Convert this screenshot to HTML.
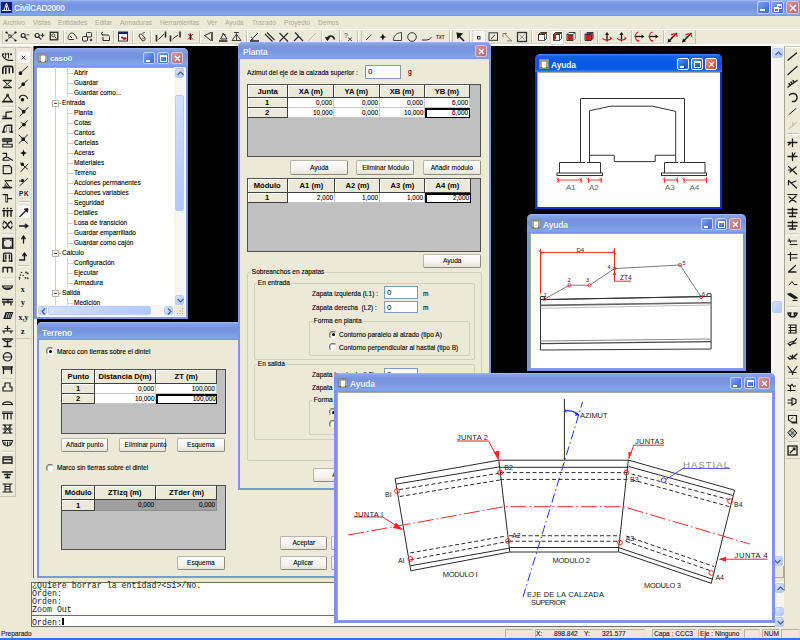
<!DOCTYPE html><html><head><meta charset="utf-8"><style>
*{box-sizing:border-box}
html,body{margin:0;padding:0}
body{width:800px;height:640px;overflow:hidden;position:relative;background:#ECE9D8;font-family:"Liberation Sans",sans-serif;font-size:7px;color:#000}
.a{position:absolute}
.t{position:absolute;white-space:nowrap;line-height:1}
.tbi{position:absolute;background:linear-gradient(180deg,#a6bcf5 0%,#86a2e8 9%,#7894e0 30%,#7794e0 52%,#7c9fe6 72%,#80a6ea 90%,#7292e6 100%)}
.tba{position:absolute;background:linear-gradient(180deg,#4d94f8 0%,#1262ea 12%,#0757e4 50%,#0a5ce8 85%,#3d88f4 100%)}
.ttl{position:absolute;color:#eef3fd;font-weight:bold;font-size:8.5px;white-space:nowrap;line-height:1;letter-spacing:-0.15px;text-shadow:0.5px 0.5px 0 rgba(60,80,160,.25)}
.cb{position:absolute;width:12px;height:12px;border-radius:2px;border:1px solid #c3d0f5;background:linear-gradient(135deg,#86a6f0 0%,#4f7ae6 60%,#3f6bdf 100%)}
.cbx{background:linear-gradient(135deg,#d49aa2 0%,#c07880 60%,#b56c76 100%);border-color:#dcc0cc}
.cba{border-color:#fff;background:linear-gradient(135deg,#5a9af8 0%,#2263e8 60%,#1a54d8 100%)}
.cbax{border-color:#fff;background:linear-gradient(135deg,#f49a7c 0%,#e05a32 60%,#cf4420 100%)}
.menu{color:#aca899;font-size:8px;transform:scaleX(.82);transform-origin:0 0}
.btn{position:absolute;background:linear-gradient(180deg,#fefefd 0%,#f4f3ee 60%,#e6e3d6 100%);border:1px solid #b9b6a8;border-right-color:#8e8c80;border-bottom-color:#8e8c80;border-radius:2px;font-size:8px;text-align:center;line-height:12px;white-space:nowrap}
.btn span{display:inline-block;transform:scaleX(.82);-webkit-text-stroke:0.1px #000}
.ui{font-size:8px;transform:scaleX(.82);transform-origin:0 0;-webkit-text-stroke:0.12px #000}
.inp{position:absolute;background:#fff;border:1px solid #7f9db9;font-size:8px;padding-left:2px;line-height:11px}
.grp{position:absolute;border:1px solid #d0d0bf;border-radius:2px}
.gl{position:absolute;background:#ECE9D8;padding:0 1px;white-space:nowrap;line-height:1;font-size:8px;transform:scaleX(.82);transform-origin:0 0;-webkit-text-stroke:0.12px #000}
.rad{position:absolute;width:8px;height:8px;border-radius:50%;background:#fff;border:1px solid;border-color:#6d6d66 #e6e4da #f4f3ee #7a7a72;box-shadow:inset 0.5px 0.5px 0 #a5a39a}
.rad.on:after{content:"";position:absolute;left:1.5px;top:1.5px;width:3px;height:3px;border-radius:50%;background:#000}
.grid{position:absolute;background:#c0c0c0;border:1px solid #505050}
.hc{position:absolute;background:#ECE9D8;border-right:1px solid #404040;border-bottom:1px solid #404040;box-shadow:inset 1px 1px 0 #fff;font-weight:bold;font-size:8px;text-align:center;white-space:nowrap}
.hc span{display:inline-block;transform:scaleX(.95)}
.dc{position:absolute;background:#fff;border-right:1px solid #c8c8c8;border-bottom:1px solid #c8c8c8;font-size:8px;text-align:right;padding-right:1px;white-space:nowrap}
.dc span{display:inline-block;transform:scaleX(.8);transform-origin:100% 50%;-webkit-text-stroke:0.1px #000}
.sbb{position:absolute;background:linear-gradient(135deg,#d6e3fd 0%,#bcd0fa 60%,#b2c8f8 100%);border:1px solid #b9cdf7;border-radius:2px}
</style></head><body>
<div class="tbi" style="left:0;top:0;width:800px;height:16px"></div>
<div class="a" style="left:1px;top:2px;width:11px;height:11px;background:#0c1c80"><svg width="11" height="11" viewBox="0 0 11 11"><path d="M5.5 1.2L2.8 8.8M5.5 1.2L8.2 8.8M0.8 8.5H10.2M5.5 3.5V8.5" stroke="#fff" stroke-width="0.9" fill="none"/></svg></div>
<div class="ttl" style="left:14px;top:4px;font-size:8.5px;letter-spacing:-0.4px">CivilCAD2000</div>
<div class="cb" style="left:757px;top:1px;width:13px;height:13px"><div class="a" style="left:2px;top:7px;width:5px;height:2px;background:#fff"></div></div>
<div class="cb" style="left:771px;top:1px;width:13px;height:13px"><div class="a" style="left:5px;top:2px;width:5px;height:5px;border:1px solid #fff;border-top-width:2px"></div><div class="a" style="left:2px;top:5px;width:5px;height:5px;border:1px solid #fff;border-top-width:2px;background:#5a80e6"></div></div>
<div class="cb cbx" style="left:786px;top:1px;width:13px;height:13px"><svg class="a" style="left:2px;top:2px" width="8" height="8"><path d="M1 1L7 7M7 1L1 7" stroke="#fff" stroke-width="1.4"/></svg></div>
<div class="t menu" style="left:3px;top:19px">Archivo</div>
<div class="t menu" style="left:33px;top:19px">Vistas</div>
<div class="t menu" style="left:58px;top:19px">Entidades</div>
<div class="t menu" style="left:95px;top:19px">Editar</div>
<div class="t menu" style="left:120px;top:19px">Armaduras</div>
<div class="t menu" style="left:160px;top:19px">Herramientas</div>
<div class="t menu" style="left:207px;top:19px">Ver</div>
<div class="t menu" style="left:225px;top:19px">Ayuda</div>
<div class="t menu" style="left:252px;top:19px">Trazado</div>
<div class="t menu" style="left:284px;top:19px">Proyecto</div>
<div class="t menu" style="left:318px;top:19px">Demos</div>
<div class="a" style="left:0;top:29px;width:800px;height:1px;background:#fcfcf9"></div>
<div class="a" style="left:0;top:44px;width:800px;height:2px;background:#fbfaf5"></div>
<svg class="a" style="left:0;top:0" width="800" height="46" viewBox="0 0 800 46">
<path d="M63.5 31V43" stroke="#c5c2b2" stroke-width="1"/><path d="M64.5 31V43" stroke="#fff" stroke-width="1"/>
<path d="M96.5 31V43" stroke="#c5c2b2" stroke-width="1"/><path d="M97.5 31V43" stroke="#fff" stroke-width="1"/>
<path d="M113.5 31V43" stroke="#c5c2b2" stroke-width="1"/><path d="M114.5 31V43" stroke="#fff" stroke-width="1"/>
<path d="M132.5 31V43" stroke="#c5c2b2" stroke-width="1"/><path d="M133.5 31V43" stroke="#fff" stroke-width="1"/>
<path d="M150.5 31V43" stroke="#c5c2b2" stroke-width="1"/><path d="M151.5 31V43" stroke="#fff" stroke-width="1"/>
<path d="M199.5 31V43" stroke="#c5c2b2" stroke-width="1"/><path d="M200.5 31V43" stroke="#fff" stroke-width="1"/>
<path d="M246.5 31V43" stroke="#c5c2b2" stroke-width="1"/><path d="M247.5 31V43" stroke="#fff" stroke-width="1"/>
<path d="M321.5 31V43" stroke="#c5c2b2" stroke-width="1"/><path d="M322.5 31V43" stroke="#fff" stroke-width="1"/>
<path d="M339.5 31V43" stroke="#c5c2b2" stroke-width="1"/><path d="M340.5 31V43" stroke="#fff" stroke-width="1"/>
<path d="M357.5 31V43" stroke="#c5c2b2" stroke-width="1"/><path d="M358.5 31V43" stroke="#fff" stroke-width="1"/>
<path d="M449.5 31V43" stroke="#c5c2b2" stroke-width="1"/><path d="M450.5 31V43" stroke="#fff" stroke-width="1"/>
<path d="M469.5 31V43" stroke="#c5c2b2" stroke-width="1"/><path d="M470.5 31V43" stroke="#fff" stroke-width="1"/>
<path d="M531.5 31V43" stroke="#c5c2b2" stroke-width="1"/><path d="M532.5 31V43" stroke="#fff" stroke-width="1"/>
<path d="M580.5 31V43" stroke="#c5c2b2" stroke-width="1"/><path d="M581.5 31V43" stroke="#fff" stroke-width="1"/>
<path d="M597.5 31V43" stroke="#c5c2b2" stroke-width="1"/><path d="M598.5 31V43" stroke="#fff" stroke-width="1"/>
<path d="M631.5 31V43" stroke="#c5c2b2" stroke-width="1"/><path d="M632.5 31V43" stroke="#fff" stroke-width="1"/>
<path d="M663.5 31V43" stroke="#c5c2b2" stroke-width="1"/><path d="M664.5 31V43" stroke="#fff" stroke-width="1"/>
<path d="M2.5 31V43" stroke="#d5d2c4"/><path d="M695.5 30V44" stroke="#c5c2b2"/><path d="M2 43.5H695" stroke="#d8d5c6"/>
<g stroke="#2a2a2a" fill="none" stroke-width="1">
<path d="M7 33L15 40M15 33L7 40" stroke-width="0.8" stroke="#444"/><circle cx="10" cy="36.2" r="1.5" stroke-width="0.8"/>
<g fill="#111" stroke="none"><circle cx="6.5" cy="32.5" r="1.1"/><circle cx="15.5" cy="32.5" r="1.1"/><circle cx="6.5" cy="40.5" r="1.1"/><circle cx="15.5" cy="40.5" r="1.1"/></g>
<circle cx="23.2" cy="35.5" r="2" stroke-width="1.2"/><path d="M24.8 37.2L27.3 39.7" stroke-width="1.2"/><path d="M26.5 34.8H29.2" stroke-width="0.9"/>
<circle cx="37.2" cy="35.5" r="2" stroke-width="1.2"/><path d="M38.8 37.2L41.3 39.7" stroke-width="1.2"/><path d="M40.5 35.2H44.5M42.5 33.2V37.2" stroke-width="1.1"/>
<rect x="50.3" y="32.3" width="7.5" height="7.5" stroke-width="1.3"/><circle cx="53.3" cy="35.3" r="1.5" stroke-width="0.8"/><path d="M54.5 36.6L56.5 38.6" stroke-width="0.9"/>
<path d="M68 39C68 35 70 33 72 33S76 36 77 39M68.5 39.5H74M70 36L72 38" stroke="#333"/>
<rect x="82.5" y="36.5" width="5" height="4.5" rx="1"/><rect x="86.5" y="32.5" width="5" height="4.5" rx="1"/><circle cx="91" cy="40" r="0.8" fill="#111"/>
<path d="M102 35H107.5C109 35 109.5 36 109.5 37.5V40.5H103V37"/><path d="M101 33.5L103 32M101 33.5L103 35"/>
</g>
<rect x="118.5" y="32" width="9" height="9" fill="#fff" stroke="#333" stroke-width="1"/><rect x="118.5" y="32" width="9" height="2" fill="#0a246a"/><ellipse cx="124.5" cy="38.5" rx="2.2" ry="1.3" fill="#d00"/><circle cx="122" cy="37.5" r="1" fill="#333"/>
<g stroke="#2a2a2a" fill="none" stroke-width="1">
<path d="M139 36C139 34 141 33.5 142.5 35L145 38C145.5 40 144 41.5 142 40.5Z" stroke="#333"/><path d="M142.5 34L144.5 32"/><circle cx="143" cy="38.5" r="0.7" fill="#d00" stroke="none"/>
<path d="M156.5 35V41.5M165.5 31.5V37.5" stroke-width="1.6"/><path d="M158.5 39.5L164 34" stroke-width="1"/>
<path d="M170.5 35.5V41.5M180 31.5V37.5" stroke-width="1.6"/><path d="M172.5 39L178 35" stroke-width="1"/>
<path d="M188 34L193 39.5M193 34L188 39.5" stroke="#e8141a" stroke-width="1"/><path d="M190.5 33.5V40" stroke="#222" stroke-width="1.5"/>
<path d="M211 32.5L204.5 35.5L211 40.5" stroke-width="1"/><path d="M212 32V41" stroke-width="1.5"/>
<path d="M219 41H227.5" stroke-width="1.6"/><path d="M220.5 39L223.5 33.5L227 39H220.5" stroke-width="1"/><path d="M222 33.5L226 35" stroke-width="0.8"/>
<path d="M236.5 32V41M232 40.5L236.5 34L241 40.5M232 40.5H241M234 32.5H239" stroke="#444"/>
<path d="M250 41H259" stroke-width="1.6"/><path d="M250.5 40.5L258 33M253 40.5C253 38.5 252 37.5 251.5 37.5" stroke-width="1"/>
<path d="M265 34L272.5 41.5M267 32.5L274.5 40" stroke-width="1.1"/>
<path d="M279.5 33L288 41.5M288 33L279.5 41.5" stroke-width="1.1"/>
<path d="M294 41L298.5 36.5M295 32.5L303 41" stroke-width="1.2"/>
<path d="M308 41L316 33" stroke="#bdbab0" stroke-width="1"/>
<path d="M327.5 39.5C327.5 35.5 333.5 34.5 334.5 39.5" stroke-width="1.6"/><path d="M325.5 37.5L327.5 40.5L329.5 37.5Z" fill="#111"/>
</g><text x="344" y="38" font-size="7" fill="#333" font-family="Liberation Sans">?</text><path d="M348 37.5L352 41M352 37.5L348 41" stroke="#333" stroke-width="0.9"/><g stroke="#1e1e1e" fill="none" stroke-width="1.1">
<path d="M361.5 31V43" stroke="#c5c2b2"/>
<path d="M366 40L371.5 34.5" stroke="#333" stroke-width="0.9"/>
<path d="M382.8 33.5L384 36.3L386.5 37L384 37.8L382.8 40.5L381.6 37.8L379.3 37L381.6 36.3Z" fill="#111" stroke="none"/>
<path d="M393.5 40.5C393.5 36 396 33 401.5 32.5V40.5Z" stroke="#444" stroke-width="1"/>
<circle cx="412" cy="37" r="4.3" stroke="#333" stroke-width="1"/>
<path d="M422 40H426C429 40 430.5 38.5 431.5 37" stroke="#333" stroke-width="1"/>
</g><text x="436" y="39" font-size="4.5" font-weight="bold" fill="#333" font-family="Liberation Sans">TXT</text><g stroke="#1e1e1e" fill="none" stroke-width="1.1">
<path d="M452.5 31V43" stroke="#c5c2b2"/>
<path d="M464 41L457.5 34.5" stroke-width="1.6"/><path d="M457 33L462 33.8L457.8 38Z" fill="#111"/>
</g>
<rect x="472.5" y="30.5" width="13" height="14" fill="#fbfbf8" stroke="#dcd9cc"/><rect x="477.5" y="36.5" width="2.5" height="2.5" fill="none" stroke="#222" stroke-width="0.9"/>
<g stroke="#2a2a2a" fill="none" stroke-width="1">
<rect x="489" y="32.8" width="8.5" height="7.5" stroke="#333"/><path d="M491 39L495 35" stroke="#333" stroke-width="0.9"/>
<path d="M503 33.5H507M503 33.5V37M504 33L511.5 41M507 41H512" stroke="#7a786e" stroke-width="0.9"/>
<rect x="517.5" y="32.5" width="9" height="9" stroke="#333" stroke-width="1.3"/><path d="M519.5 34.5L524.5 39.5M524.5 34.5L519.5 39.5" stroke="#777" stroke-width="0.8"/>
</g>
<path d="M538.5 34.5L540.5 32.5H546.5V38.5L544.5 40.5H538.5Z" fill="#fff" stroke="#222" stroke-width="0.9"/><path d="M539.0 35.0L540.8 33.0H546.0L544.2 35.0Z" fill="#e01010"/><rect x="539.0" y="35.0" width="5.2" height="5.2" fill="#fff"/><path d="M544.5 35.0L546.2 33.2V38.5L544.5 40.2Z" fill="#fff"/><path d="M538.5 34.5H544.5V40.5M544.5 34.5L546.5 32.5" stroke="#222" stroke-width="0.8" fill="none"/>
<rect x="550.5" y="30.5" width="13" height="14" fill="#fbfbf8" stroke="#dcd9cc"/>
<path d="M553.5 34.5L555.5 32.5H561.5V38.5L559.5 40.5H553.5Z" fill="#fff" stroke="#222" stroke-width="0.9"/><path d="M554.0 35.0L555.8 33.0H561.0L559.2 35.0Z" fill="#e01010"/><rect x="554.0" y="35.0" width="5.2" height="5.2" fill="#fff"/><path d="M559.5 35.0L561.2 33.2V38.5L559.5 40.2Z" fill="#fff"/><path d="M553.5 34.5H559.5V40.5M559.5 34.5L561.5 32.5" stroke="#222" stroke-width="0.8" fill="none"/>
<path d="M554 35L556 33V39L554 40.5Z" fill="#e01010"/>
<path d="M567 34.5L569 32.5H575V38.5L573 40.5H567Z" fill="#fff" stroke="#222" stroke-width="0.9"/><path d="M567.5 35.0L569.3 33.0H574.5L572.7 35.0Z" fill="#fff"/><rect x="567.5" y="35.0" width="5.2" height="5.2" fill="#e01010"/><path d="M573 35.0L574.7 33.2V38.5L573 40.2Z" fill="#fff"/><path d="M567 34.5H573V40.5M573 34.5L575 32.5" stroke="#222" stroke-width="0.8" fill="none"/>
<path d="M585 34.5L587 32.5H593V38.5L591 40.5H585Z" fill="#fff" stroke="#222" stroke-width="0.9"/><path d="M585.5 35.0L587.3 33.0H592.5L590.7 35.0Z" fill="#e01010"/><rect x="585.5" y="35.0" width="5.2" height="5.2" fill="#e01010"/><path d="M591 35.0L592.7 33.2V38.5L591 40.2Z" fill="#c00000"/><path d="M585 34.5H591V40.5M591 34.5L593 32.5" stroke="#222" stroke-width="0.8" fill="none"/>
<path d="M607 41.5V33.5" stroke="#111" stroke-width="1.3"/><path d="M605 35L607 32L609 35Z" fill="#111"/><path d="M603 38C602 40.5 612 40.5 611 38" stroke="#e8141a" stroke-width="1.1" fill="none"/><path d="M610 36.5L612.3 38.5L610 39.5Z" fill="#e8141a"/>
<path d="M621.5 41.5V33.5" stroke="#111" stroke-width="1.3"/><path d="M619.5 35L621.5 32L623.5 35Z" fill="#111"/><path d="M617.5 38C616.5 40.5 626.5 40.5 625.5 38" stroke="#e8141a" stroke-width="1.1" fill="none"/><path d="M624.5 36.5L626.8 38.5L624.5 39.5Z" fill="#e8141a"/>
<path d="M634.5 36.5H642.5" stroke="#111" stroke-width="1.3"/><path d="M641.5 34.5L644.5 36.5L641.5 38.5Z" fill="#111"/><path d="M638.5 32C634.5 33 634.5 40 638.5 41" stroke="#e8141a" stroke-width="1.1" fill="none"/><path d="M637.5 39.5L640.0 41L637.5 42Z" fill="#e8141a"/>
<path d="M648.5 36.5H656.5" stroke="#111" stroke-width="1.3"/><path d="M655.5 34.5L658.5 36.5L655.5 38.5Z" fill="#111"/><path d="M652.5 32C648.5 33 648.5 40 652.5 41" stroke="#e8141a" stroke-width="1.1" fill="none"/><path d="M651.5 39.5L654.0 41L651.5 42Z" fill="#e8141a"/>
<path d="M669 41L677 33" stroke="#111" stroke-width="1.3"/><path d="M667.5 42.5L668.5 38.5L671.5 41.5Z" fill="#111"/><path d="M671 35C674 33 678 34 677 37" stroke="#e8141a" stroke-width="1.1" fill="none"/><path d="M671 38L673 36" stroke="#e8141a" stroke-width="1"/>
<path d="M683.5 41L691.5 33" stroke="#111" stroke-width="1.3"/><path d="M682.0 42.5L683.0 38.5L686.0 41.5Z" fill="#111"/><path d="M685.5 35C688.5 33 692.5 34 691.5 37" stroke="#e8141a" stroke-width="1.1" fill="none"/><path d="M685.5 38L687.5 36" stroke="#e8141a" stroke-width="1"/>
</svg>
<svg class="a" style="left:0;top:46px" width="33" height="532" viewBox="0 46 33 532">
<path d="M15.5 47V497M0 47.5H15M16.5 47.5H31M16 338.5H31M0 496.5H15" stroke="#c9c6b6"/><path d="M31.5 47V578" stroke="#dcd9cc"/>
<path d="M2 106.7H13" stroke="#c5c2b2"/><path d="M2 107.7H13" stroke="#fff"/>
<path d="M2 233.8H13" stroke="#c5c2b2"/><path d="M2 234.8H13" stroke="#fff"/>
<path d="M2 278.0H13" stroke="#c5c2b2"/><path d="M2 279.0H13" stroke="#fff"/>
<path d="M2 379.0H13" stroke="#c5c2b2"/><path d="M2 380.0H13" stroke="#fff"/>
<path d="M2 451.3H13" stroke="#c5c2b2"/><path d="M2 452.3H13" stroke="#fff"/>
<path d="M18 201.6H30" stroke="#c5c2b2"/><path d="M18 202.6H30" stroke="#fff"/>
<path d="M18 265.5H30" stroke="#c5c2b2"/><path d="M18 266.5H30" stroke="#fff"/>
<rect x="17" y="51" width="13.5" height="12.5" fill="#faf9f5" stroke="#e2dfd3" stroke-width="0.6"/>
<rect x="17" y="205" width="13.5" height="13.5" fill="#faf9f5" stroke="#e2dfd3" stroke-width="0.6"/>
<g stroke="#1c1c1c" fill="none" stroke-width="1.1" stroke-linecap="round">
<g fill="#1c1c1c" stroke="none"><circle cx="3" cy="54.2" r="1"/><circle cx="5.6" cy="54" r="1"/><circle cx="8.3" cy="54" r="1"/><circle cx="11" cy="54.2" r="1"/></g><path d="M2.5 55.5C4 58.5 6 60 9 60.3H12.8" stroke-width="1.2"/><path d="M5.5 55V57.5M8.5 55V58" stroke-width="0.9"/>
<path d="M2.8 73.5V69C2.8 67 4 66.2 6 66.2H11C12.3 66.2 12.8 67 12.8 68.5V72.5" stroke-width="1.6"/><path d="M5.8 68V73.5M9.3 68V73" stroke-width="1.5"/><path d="M4.5 67.5H11.5" stroke="#888" stroke-width="0.8" stroke-dasharray="1 0.8"/>
<path d="M3.3 80.6H11.2M3.8 87.4H11.2" stroke-width="1.5"/><path d="M4.5 81.2L7.4 84.3L10.4 81.2M4.5 86.8L7.4 84.3L10.4 86.8" stroke-width="1"/>
<path d="M7.5 95.5L3.2 101.2H11.8Z" stroke-width="1.1"/><path d="M2.5 101.8H12.5" stroke-width="1.4"/><circle cx="7.5" cy="95" r="1" stroke-width="0.9"/>
<path d="M6 117.5V112.3L11.8 111.6" stroke-width="1.2"/><path d="M3 118.4H11.2" stroke-width="1.8"/><path d="M3 116.3H6" stroke-width="1"/>
<path d="M3.3 132L4.3 127.5C4.8 125.8 6 125.2 8 125.2H11.6V132" stroke-width="1.4"/><path d="M6.5 127.5V131.5M9.3 127.5V131.5" stroke="#888" stroke-width="0.9"/><path d="M2.5 132H5M10 132H12.6" stroke-width="1.4"/>
<path d="M3 138.6H11.8V141.6H3Z" fill="#555" stroke-width="0.9"/><path d="M2.8 144.3H12.2V147H2.8Z" stroke-width="1.1"/><circle cx="7.5" cy="142.8" r="0.9" fill="#111" stroke="none"/>
<path d="M3 153.4H6.5V156.3" stroke-width="1.2"/><path d="M3 160C3 157 8 156.5 9.3 158.5L12.5 160.3M3 160.2H9" stroke-width="1.1"/>
<path d="M3.2 165.5V173.5M3.2 173.6H11.6" stroke-width="1.2" stroke-dasharray="1 0.7"/><path d="M4 165.6H9.5L11.5 167.5V173" stroke-width="1.2"/><path d="M4.5 167H10" stroke="#999" stroke-width="0.7"/>
<path d="M5 180.6H11.6" stroke-width="1.2"/><path d="M5.2 181L9.5 187" stroke-width="1.1"/><path d="M5 183L8.3 187H4Z" fill="#666" stroke="none"/><path d="M3 187.6H11.6" stroke-width="1.6"/>
<path d="M3 194.6H7.5" stroke-width="1.2"/><rect x="5.8" y="195" width="1.8" height="7" fill="#fff" stroke-width="0.9"/><path d="M7.6 198.6H11.8" stroke-width="1.1"/>
<g fill="#1c1c1c" stroke="none"><circle cx="4" cy="208.6" r="0.9"/><circle cx="7.5" cy="208.4" r="0.9"/><circle cx="11" cy="208.6" r="0.9"/></g><path d="M2.5 210.6H12.5" stroke-width="1.3"/><path d="M4 211V216.3M7.5 211V216.3M11 211V216.3" stroke-width="1.5"/>
<path d="M4 221L11 229M11 221L4 229M3 224C3 221 6 221 7.5 225C9 229 12 229 12 226M3 226C3 229 6 229 7.5 225C9 221 12 221 12 224" stroke-width="1.1"/>
<rect x="3" y="238.6" width="9.6" height="9.4" fill="#e6e4da" stroke-width="1.7"/><g fill="#222" stroke="none"><circle cx="4.8" cy="240.4" r="0.7"/><circle cx="10.8" cy="240.4" r="0.7"/><circle cx="4.8" cy="246.2" r="0.7"/><circle cx="10.8" cy="246.2" r="0.7"/></g>
<path d="M3.6 260.5V254.3C3.6 253.5 4 253.2 4.8 253.2H10.4C11.2 253.2 11.6 253.5 11.6 254.3V260.5M5.8 255V259M9.4 255V259" stroke-width="1.3"/><g fill="#1c1c1c" stroke="none"><ellipse cx="3.8" cy="261" rx="1.4" ry="0.9"/><ellipse cx="5.8" cy="261" rx="1" ry="0.8"/><ellipse cx="9.4" cy="261" rx="1" ry="0.8"/><ellipse cx="11.4" cy="261" rx="1.4" ry="0.9"/></g>
<path d="M3 267.5H12M3 267.5V272M7.5 267.5V272M12 267.5V272" stroke-width="1.4"/>
<path d="M2.5 286C4 290.5 11 290.5 12.5 286H2.5M5 288H10" stroke-width="1.2"/>
<path d="M2.5 299.5H12.5M2.5 302H12.5M4 302V305M8 299.5V303M11 302V305" stroke-width="1.3"/>
<path d="M4 318.5L6 312.5H12.5L10.5 318.5ZM6.5 313L5 318M8.5 313L7 318M10.5 313L9 318" stroke-width="1.1"/>
<path d="M2.5 331H12.5M7.5 326V331M4 331V333M11 331V333M5 328.5H10" stroke-width="1.2"/>
<path d="M2.5 339H12.5M4 340.5C6 342 9 342 11 340.5M7.5 341V346M4 346.5H11" stroke-width="1.4"/>
<circle cx="7.5" cy="356.8" r="4.2" stroke-width="1.2"/><path d="M4 357H11" stroke-width="1.2"/>
<path d="M2.5 367H12.5M3.5 367V373.5M11.5 367V373.5M3 369H12" stroke-width="1.3"/>
<path d="M5 383V387H3V391H12V387H10V383H5" stroke-width="1.2"/>
<path d="M2.5 404.5C3.5 401 11.5 401 12.5 404.5H2.5" stroke-width="1.1"/>
<path d="M2.5 412H12.5M2.5 413.5H12.5M4 413.5V419M7.5 413.5V419M11 413.5V419" stroke-width="1.2"/>
<path d="M3 425H12M3 433H12M4 425L11 433M11 425L4 433M3 429H12M5 425V433M10 425V433" stroke-width="1"/>
<path d="M2.5 440.5H12.5C12 444 11 446 7.5 446C4 446 3 444 2.5 440.5M5 442V445M7.5 442V446M10 442V445" stroke-width="1.1"/>
<path d="M3 457H12M3 459.5H12M3 457V463.5M12 457V463.5M3 463H12" stroke-width="1.3"/>
<path d="M2.5 472H12.5M4.5 474.5H10.5M7.5 474V478M5.5 477.5H9.5" stroke-width="1.5"/>
<path d="M3 484H12M5 484V492M10 484V492M5 486.5H10M5 489H10M3 492H12" stroke-width="1.1"/>
<path d="M22 56L25 59.3M25 56L22 59.3" stroke-width="0.9"/>
<path d="M20.5 73L27.5 66.5" stroke-width="1"/><circle cx="20.5" cy="73.2" r="1.3" fill="#111"/>
<path d="M19 88.5L27.5 80" stroke-width="1"/><circle cx="23.2" cy="84.2" r="1.3" fill="#111"/>
<path d="M19.5 98C20 94.5 26 94 27.5 98.5" stroke-width="1.2"/><circle cx="22.5" cy="99.8" r="1.2" fill="#111"/>
<path d="M19 107.5L23.5 112M28 107.5L20 116" stroke-width="1"/><circle cx="23.7" cy="111.7" r="1.3" fill="#111"/>
<path d="M19 129L27.5 120.8" stroke-width="1"/><circle cx="24" cy="124.6" r="1.3" fill="#111"/><path d="M21 122.5L23 123.5" stroke-width="0.8"/>
<path d="M19 135L27.5 143.3M27.5 135L19 143.3" stroke-width="1"/><circle cx="23.2" cy="139.2" r="1.3" fill="#111"/>
<path d="M23.5 149.5L24.5 152L27 153L24.5 154L23.5 156.5L22.5 154L20 153L22.5 152Z" fill="#111" stroke="none"/>
<path d="M20.5 163L27.5 169M21 171.5L28 164" stroke-width="1"/><circle cx="22.3" cy="164.2" r="1.2" fill="#111"/>
<path d="M20 185.5L27.5 178.5" stroke-width="1"/><path d="M19.5 181H23" stroke-width="1"/><circle cx="22.5" cy="180.6" r="1.1" fill="#111"/>
</g>
<text x="19" y="196.4" font-size="6.4" font-weight="bold" font-family="Liberation Sans" fill="#111" textLength="9.5">PK</text>
<g stroke="#1c1c1c" fill="none" stroke-width="1.3" stroke-linecap="round">
<path d="M20 216.5L26.5 210"/><path d="M24.5 209L28 208.5L27.5 212Z" fill="#111" stroke-width="0.8"/>
<path d="M19.5 226H26.5"/><path d="M25.5 224L28.5 226L25.5 228Z" fill="#111" stroke-width="0.8"/>
<path d="M23.5 243V238"/><path d="M21.5 238.5L23.5 235.5L25.5 238.5Z" fill="#111" stroke-width="0.8"/>
<path d="M19.5 260H24.5V255"/><path d="M22.5 255.5L24.5 252.5L26.5 255.5Z" fill="#111" stroke-width="0.8"/>
</g>
<g fill="#222"><circle cx="21.5" cy="272.5" r="0.8"/><circle cx="20.5" cy="275" r="0.8"/><circle cx="19.5" cy="277.5" r="0.8"/><circle cx="19.5" cy="279" r="0.7"/><circle cx="26" cy="272.5" r="0.9"/><circle cx="27.8" cy="273.3" r="0.9"/><circle cx="25.5" cy="277.8" r="0.9"/><circle cx="27.8" cy="278.3" r="0.9"/><circle cx="23.2" cy="275.5" r="0.7"/></g>
<text x="20.8" y="292.3" font-size="8" font-weight="bold" font-family="Liberation Serif" fill="#111">x</text>
<text x="21" y="305" font-size="8" font-weight="bold" font-family="Liberation Serif" fill="#111">y</text>
<text x="18.6" y="319.8" font-size="8" font-weight="bold" font-family="Liberation Serif" fill="#111" textLength="10">x,y</text>
<text x="21" y="333.5" font-size="8" font-weight="bold" font-family="Liberation Serif" fill="#111">z</text>
</svg>
<svg class="a" style="left:785px;top:46px" width="15" height="545" viewBox="785 46 15 545">
<path d="M786 46.5H800" stroke="#c9c6b6"/><path d="M786 47.5H800" stroke="#fff"/><path d="M786 458.5H800" stroke="#c9c6b6"/>
<path d="M787 133.6H799" stroke="#c5c2b2"/><path d="M787 134.6H799" stroke="#fff"/>
<path d="M787 234.0H799" stroke="#c5c2b2"/><path d="M787 235.0H799" stroke="#fff"/>
<path d="M787 306.9H799" stroke="#c5c2b2"/><path d="M787 307.9H799" stroke="#fff"/>
<path d="M787 378.6H799" stroke="#c5c2b2"/><path d="M787 379.6H799" stroke="#fff"/>
<path d="M787 410.8H799" stroke="#c5c2b2"/><path d="M787 411.8H799" stroke="#fff"/>
<path d="M787 441.7H799" stroke="#c5c2b2"/><path d="M787 442.7H799" stroke="#fff"/>
<g stroke="#1c1c1c" fill="none" stroke-width="1.2" stroke-linecap="round">
<path d="M788 60L796.5 53" stroke-width="1.4"/>
<path d="M788 74.5L797 66.5" stroke-width="1.3" stroke-dasharray="1.2 1"/>
<path d="M788 87L797 80.5M790 85L789 83.5M792 83.5L791 82M794 82L793 80.5" stroke-width="1.4"/>
<path d="M789.5 95C792 92.5 797 93 797 97.5C797 100 795 102 792.5 101.5" stroke-width="1.5" stroke-dasharray="1.3 0.8"/>
<path d="M789 114.5L796 108.5" stroke-width="1"/>
<path d="M789 128.5L796.5 122.5M793 122.5V126" stroke="#b4b1a5" stroke-width="1"/>
<path d="M788 142.5H797M792.5 139V146.5M788.5 145L790.5 143" stroke-width="1.3"/>
<path d="M788 156.5H797M792.5 153V160.5M795 153L793 156" stroke-width="1.3"/>
<path d="M788.5 166.5L796.5 174M796 167L790 172M788.5 170H792" stroke-width="1.2"/>
<path d="M788.5 180.5L796.5 188M788.5 181V185M791 183L796 181" stroke-width="1.2"/>
<path d="M788 194.5H797M789 197L796 202M796 196L789.5 202" stroke-width="1.2"/>
<path d="M788 209.5H797M788 213H797M792.5 208V216.5M789.5 216.5H795.5" stroke-width="1.3"/>
<path d="M788 222.5H797M788 226H797M792.5 221V229M789.5 229H795.5" stroke-width="1.3"/>
<path d="M788 241H796.5M789 239L790.5 242.5" stroke-width="1.2"/><path d="M790 244.5H797" stroke-width="1"/>
<path d="M788 254.5H797M790.5 252.5V260.5M792 258H797" stroke-width="1.2"/>
<path d="M788.5 272L795.5 265.5M788.5 272H796" stroke-width="1.3"/>
<path d="M789 285L792 281.5L794 284.5H797" stroke-width="1"/>
<path d="M788 294L795 298.5M790 293.5L797 298" stroke-width="1.5"/><path d="M793 300.5H797" stroke-width="1.2"/>
<path d="M788 313C788.5 318 796.5 318 797 313M789 313H791M794 313H796M790.5 313.5V317M794.5 313.5V317" stroke-width="1.5"/>
<path d="M788.5 325H796V333H788.5M789 327.5H795M789 330.5H795M790.5 325V333" stroke-width="1.2"/>
<path d="M788 343.5L790 345.5C792 344 795 341 796.5 338.5M789.5 342.5L795.5 340.5M790 344.5L796 343" stroke-width="1.2"/>
<path d="M788 357.5L790 359.5C792 358 795 356 797 354M790 356L796 359M792.5 355V359" stroke-width="1.2"/>
<path d="M788 366.5L792.5 372.5L797 366.5M792.5 372.5V374.5M789 372L796 372.5" stroke-width="1.2"/>
<path d="M788 385L790 386.5L792 384.5L793.5 386.5M788 390.5H795M790.5 386V391M795 385.5V386.5" stroke-width="1.2"/>
<path d="M788 400H792M788 403H792M792 398L796 399.5V403L792 405V398" stroke-width="1.2"/>
<path d="M788.5 415.5H796.5V422H791.5L788.5 420V415.5M792 423H797" stroke-width="1.2"/><path d="M791 419L793 417.5" stroke-width="0.8"/>
<path d="M792.5 428.5L797 433L792.5 437.5L788 433Z" stroke-width="1" fill="#bbb"/><path d="M790 430.5L795 435.5M795 430.5L790 435.5" stroke-width="0.8"/>
<rect x="788" y="446" width="9" height="9" stroke-width="1.3"/><path d="M790 453L795 448M793 448H795V450" stroke-width="1.1"/>
</g></svg>
<div class="a" style="left:33px;top:46px;width:738px;height:532px;background:#000"></div>
<div class="a" style="left:33px;top:46px;width:1px;height:532px;background:#6f6d62"></div>
<div class="a" style="left:34px;top:319px;width:3px;height:259px;background:#f3f2ec"></div>
<div class="a" style="left:771px;top:46px;width:13px;height:532px;background:#f5f4ef"></div>
<div class="sbb" style="left:772px;top:48px;width:11px;height:10px"><svg class="a" style="left:2px;top:2px" width="7" height="5"><path d="M0.5 4L3.5 1L6.5 4" stroke="#4d6185" stroke-width="1.2" fill="none"/></svg></div>
<div class="sbb" style="left:772px;top:301px;width:10px;height:12px"></div>
<div class="a" style="left:784px;top:46px;width:1px;height:545px;background:#aca899"></div>
<div class="a" style="left:31px;top:582px;width:744px;height:45px;background:#fff;border:1px solid #6f6d62;border-right:none"></div>
<div class="a" style="left:32px;top:615px;width:743px;height:1px;background:#6f6d62"></div>
<div class="a" style="left:775px;top:582px;width:9px;height:45px;background:#f5f4ef"></div>
<div class="sbb" style="left:775px;top:583px;width:9px;height:10px"><svg class="a" style="left:1px;top:2px" width="7" height="5"><path d="M0.5 4L3.5 1L6.5 4" stroke="#4d6185" stroke-width="1.2" fill="none"/></svg></div>
<div class="sbb" style="left:775px;top:607px;width:9px;height:9px"></div>
<div class="sbb" style="left:775px;top:617px;width:9px;height:10px"><svg class="a" style="left:1px;top:2px" width="7" height="5"><path d="M0.5 1L3.5 4L6.5 1" stroke="#4d6185" stroke-width="1.2" fill="none"/></svg></div>
<div class="a" style="left:771px;top:566px;width:13px;height:12px;background:#ECE9D8;border-right:1px solid #aca899;border-bottom:1px solid #aca899"></div>
<div class="sbb" style="left:772px;top:556px;width:11px;height:10px"><svg class="a" style="left:1px;top:2px" width="7" height="5"><path d="M0.5 1L3.5 4L6.5 1" stroke="#4d6185" stroke-width="1.2" fill="none"/></svg></div>
<div class="t" style="left:32px;top:582px;font-family:'Liberation Mono',monospace;font-size:8.3px;color:#222">¿Quiere borrar la entidad?&lt;Si&gt;/No.</div>
<div class="t" style="left:32px;top:590px;font-family:'Liberation Mono',monospace;font-size:8.3px;color:#222">Orden:</div>
<div class="t" style="left:32px;top:598px;font-family:'Liberation Mono',monospace;font-size:8.3px;color:#222">Orden:</div>
<div class="t" style="left:32px;top:606px;font-family:'Liberation Mono',monospace;font-size:8.3px;color:#222">Zoom Out</div>
<div class="t" style="left:32px;top:618px;font-family:'Liberation Mono',monospace;font-size:8.3px;color:#222">Orden:<span style="display:inline-block;width:1.5px;height:7px;background:#000;margin-left:0.5px;vertical-align:-0.5px"></span></div>
<div class="t ui" style="left:1px;top:630px;color:#222">Preparado</div>
<div class="a" style="left:505px;top:629px;width:28px;height:9px;border:1px solid #e6e3d5;border-top-color:#b5b2a3;border-left-color:#b5b2a3"></div>
<div class="a" style="left:535px;top:629px;width:110px;height:9px;border:1px solid #e6e3d5;border-top-color:#b5b2a3;border-left-color:#b5b2a3"></div>
<div class="a" style="left:652px;top:629px;width:45px;height:9px;border:1px solid #e6e3d5;border-top-color:#b5b2a3;border-left-color:#b5b2a3"></div>
<div class="t ui" style="left:654px;top:630px;color:#222">Capa : CCC3</div>
<div class="a" style="left:698px;top:629px;width:44px;height:9px;border:1px solid #e6e3d5;border-top-color:#b5b2a3;border-left-color:#b5b2a3"></div>
<div class="t ui" style="left:700px;top:630px;color:#222">Eje : Ninguno</div>
<div class="a" style="left:744px;top:629px;width:16px;height:9px;border:1px solid #e6e3d5;border-top-color:#b5b2a3;border-left-color:#b5b2a3"></div>
<div class="a" style="left:762px;top:629px;width:18px;height:9px;border:1px solid #e6e3d5;border-top-color:#b5b2a3;border-left-color:#b5b2a3"></div>
<div class="t ui" style="left:764px;top:630px;color:#222">NUM</div>
<div class="a" style="left:781px;top:629px;width:19px;height:9px;border:1px solid #e6e3d5;border-top-color:#b5b2a3;border-left-color:#b5b2a3"></div>
<div class="t ui" style="left:536px;top:630px;color:#222">X:</div>
<div class="t ui" style="left:553.5px;top:630px;color:#222">898.842</div>
<div class="t ui" style="left:584px;top:630px;color:#222">Y:</div>
<div class="t ui" style="left:601.5px;top:630px;color:#222">321.577</div>
<div class="a" style="left:0;top:638px;width:800px;height:2px;background:#3b6fe6"></div>
<div class="a" style="left:34px;top:48px;width:154px;height:271px;background:#7b97e4;border-radius:5px 5px 0 0;overflow:hidden">
<div class="tbi" style="left:0;top:0;width:154px;height:19px"></div>
<svg class="a" style="left:4px;top:5px" width="10" height="10" viewBox="0 0 10 10"><rect x="0.5" y="0.5" width="9" height="9" fill="#a9a9a3" stroke="#8a8a84"/><rect x="3" y="2" width="4" height="6.5" fill="#fff"/><path d="M1.5 2H8.5" stroke="#777" stroke-width="1"/><path d="M1.5 8.5H3M7 8.5H8.5" stroke="#555" stroke-width="1"/></svg>
<div class="ttl" style="left:16px;top:7px;font-size:8px">caso0</div>
<div class="cb cbx" style="left:137px;top:4px"><svg class="a" style="left:2px;top:2px" width="7" height="7"><path d="M1 1L6 6M6 1L1 6" stroke="#fff" stroke-width="1.3"/></svg></div>
<div class="cb " style="left:123px;top:4px"><div class="a" style="left:2px;top:2px;width:7px;height:7px;border:1px solid #fff;border-top-width:2px"></div></div>
<div class="cb " style="left:109px;top:4px"><div class="a" style="left:2px;top:7px;width:4px;height:2px;background:#fff"></div></div>
</div>
<div class="a" style="left:36px;top:67px;width:150px;height:250px;background:#fff;border-left:1px solid #aca899;border-top:1px solid #aca899"></div>
<div class="a" style="left:55px;top:67px;width:1px;height:239px;background:#d4d3ca"></div>
<div class="a" style="left:67px;top:67px;width:1px;height:10px;background:#d4d3ca"></div>
<div class="a" style="left:68px;top:73px;width:5px;height:1px;background:#d4d3ca"></div>
<div class="t ui" style="left:74px;top:69px;">Abrir</div>
<div class="a" style="left:67px;top:77px;width:1px;height:10px;background:#d4d3ca"></div>
<div class="a" style="left:68px;top:83px;width:5px;height:1px;background:#d4d3ca"></div>
<div class="t ui" style="left:74px;top:79px;">Guardar</div>
<div class="a" style="left:67px;top:87px;width:1px;height:10px;background:#d4d3ca"></div>
<div class="a" style="left:68px;top:93px;width:5px;height:1px;background:#d4d3ca"></div>
<div class="t ui" style="left:74px;top:89px;">Guardar como...</div>
<div class="a" style="left:52px;top:100px;width:7px;height:7px;background:#fff;border:1px solid #b4b4a6"><div class="a" style="left:1px;top:2px;width:3px;height:1px;background:#444"></div></div>
<div class="a" style="left:59px;top:103px;width:2px;height:1px;background:#a0a0a0"></div>
<div class="t ui" style="left:62px;top:99px;">Entrada</div>
<div class="a" style="left:67px;top:107px;width:1px;height:10px;background:#d4d3ca"></div>
<div class="a" style="left:68px;top:113px;width:5px;height:1px;background:#d4d3ca"></div>
<div class="t ui" style="left:74px;top:109px;">Planta</div>
<div class="a" style="left:67px;top:117px;width:1px;height:10px;background:#d4d3ca"></div>
<div class="a" style="left:68px;top:123px;width:5px;height:1px;background:#d4d3ca"></div>
<div class="t ui" style="left:74px;top:119px;">Cotas</div>
<div class="a" style="left:67px;top:127px;width:1px;height:10px;background:#d4d3ca"></div>
<div class="a" style="left:68px;top:133px;width:5px;height:1px;background:#d4d3ca"></div>
<div class="t ui" style="left:74px;top:129px;">Cantos</div>
<div class="a" style="left:67px;top:137px;width:1px;height:10px;background:#d4d3ca"></div>
<div class="a" style="left:68px;top:143px;width:5px;height:1px;background:#d4d3ca"></div>
<div class="t ui" style="left:74px;top:139px;">Cartelas</div>
<div class="a" style="left:67px;top:147px;width:1px;height:10px;background:#d4d3ca"></div>
<div class="a" style="left:68px;top:153px;width:5px;height:1px;background:#d4d3ca"></div>
<div class="t ui" style="left:74px;top:149px;">Aceras</div>
<div class="a" style="left:67px;top:157px;width:1px;height:10px;background:#d4d3ca"></div>
<div class="a" style="left:68px;top:163px;width:5px;height:1px;background:#d4d3ca"></div>
<div class="t ui" style="left:74px;top:159px;">Materiales</div>
<div class="a" style="left:67px;top:167px;width:1px;height:10px;background:#d4d3ca"></div>
<div class="a" style="left:68px;top:173px;width:5px;height:1px;background:#d4d3ca"></div>
<div class="t ui" style="left:74px;top:169px;">Terreno</div>
<div class="a" style="left:67px;top:177px;width:1px;height:10px;background:#d4d3ca"></div>
<div class="a" style="left:68px;top:183px;width:5px;height:1px;background:#d4d3ca"></div>
<div class="t ui" style="left:74px;top:179px;">Acciones permanentes</div>
<div class="a" style="left:67px;top:187px;width:1px;height:10px;background:#d4d3ca"></div>
<div class="a" style="left:68px;top:193px;width:5px;height:1px;background:#d4d3ca"></div>
<div class="t ui" style="left:74px;top:189px;">Acciones variables</div>
<div class="a" style="left:67px;top:197px;width:1px;height:10px;background:#d4d3ca"></div>
<div class="a" style="left:68px;top:203px;width:5px;height:1px;background:#d4d3ca"></div>
<div class="t ui" style="left:74px;top:199px;">Seguridad</div>
<div class="a" style="left:67px;top:207px;width:1px;height:10px;background:#d4d3ca"></div>
<div class="a" style="left:68px;top:213px;width:5px;height:1px;background:#d4d3ca"></div>
<div class="t ui" style="left:74px;top:209px;">Detalles</div>
<div class="a" style="left:67px;top:217px;width:1px;height:10px;background:#d4d3ca"></div>
<div class="a" style="left:68px;top:223px;width:5px;height:1px;background:#d4d3ca"></div>
<div class="t ui" style="left:74px;top:219px;">Losa de transición</div>
<div class="a" style="left:67px;top:227px;width:1px;height:10px;background:#d4d3ca"></div>
<div class="a" style="left:68px;top:233px;width:5px;height:1px;background:#d4d3ca"></div>
<div class="t ui" style="left:74px;top:229px;">Guardar emparrillado</div>
<div class="a" style="left:67px;top:237px;width:1px;height:10px;background:#d4d3ca"></div>
<div class="a" style="left:68px;top:243px;width:5px;height:1px;background:#d4d3ca"></div>
<div class="t ui" style="left:74px;top:239px;">Guardar como cajón</div>
<div class="a" style="left:52px;top:250px;width:7px;height:7px;background:#fff;border:1px solid #b4b4a6"><div class="a" style="left:1px;top:2px;width:3px;height:1px;background:#444"></div></div>
<div class="a" style="left:59px;top:253px;width:2px;height:1px;background:#a0a0a0"></div>
<div class="t ui" style="left:62px;top:249px;">Calculo</div>
<div class="a" style="left:67px;top:257px;width:1px;height:10px;background:#d4d3ca"></div>
<div class="a" style="left:68px;top:263px;width:5px;height:1px;background:#d4d3ca"></div>
<div class="t ui" style="left:74px;top:259px;">Configuración</div>
<div class="a" style="left:67px;top:267px;width:1px;height:10px;background:#d4d3ca"></div>
<div class="a" style="left:68px;top:273px;width:5px;height:1px;background:#d4d3ca"></div>
<div class="t ui" style="left:74px;top:269px;">Ejecutar</div>
<div class="a" style="left:67px;top:277px;width:1px;height:10px;background:#d4d3ca"></div>
<div class="a" style="left:68px;top:283px;width:5px;height:1px;background:#d4d3ca"></div>
<div class="t ui" style="left:74px;top:279px;">Armadura</div>
<div class="a" style="left:52px;top:290px;width:7px;height:7px;background:#fff;border:1px solid #b4b4a6"><div class="a" style="left:1px;top:2px;width:3px;height:1px;background:#444"></div></div>
<div class="a" style="left:59px;top:293px;width:2px;height:1px;background:#a0a0a0"></div>
<div class="t ui" style="left:62px;top:289px;">Salida</div>
<div class="a" style="left:67px;top:297px;width:1px;height:10px;background:#d4d3ca"></div>
<div class="a" style="left:68px;top:303px;width:5px;height:1px;background:#d4d3ca"></div>
<div class="t ui" style="left:74px;top:299px;">Medición</div>
<div class="a" style="left:174px;top:67px;width:11px;height:239px;background:#f7f6f1"></div>
<div class="sbb" style="left:175px;top:68px;width:9px;height:10px"><svg class="a" style="left:1px;top:2px" width="7" height="5"><path d="M0.5 4L3.5 1L6.5 4" stroke="#4d6185" stroke-width="1.2" fill="none"/></svg></div>
<div class="sbb" style="left:175px;top:95px;width:9px;height:116px"></div>
<div class="sbb" style="left:175px;top:295px;width:9px;height:10px"><svg class="a" style="left:1px;top:2px" width="7" height="5"><path d="M0.5 1L3.5 4L6.5 1" stroke="#4d6185" stroke-width="1.2" fill="none"/></svg></div>
<div class="a" style="left:37px;top:305px;width:148px;height:11px;background:#f7f6f1"></div>
<div class="sbb" style="left:38px;top:306px;width:9px;height:9px"><svg class="a" style="left:2px;top:1px" width="5" height="7"><path d="M4 0.5L1 3.5L4 6.5" stroke="#4d6185" stroke-width="1.2" fill="none"/></svg></div>
<div class="sbb" style="left:48px;top:306px;width:103px;height:9px"></div>
<div class="sbb" style="left:164px;top:306px;width:9px;height:9px"><svg class="a" style="left:2px;top:1px" width="5" height="7"><path d="M1 0.5L4 3.5L1 6.5" stroke="#4d6185" stroke-width="1.2" fill="none"/></svg></div>
<div class="a" style="left:174px;top:305px;width:11px;height:11px;background:#ECE9D8"><svg width="11" height="11"><g fill="#b0ad9f"><rect x="8" y="3" width="1.2" height="1.2"/><rect x="5.5" y="5.5" width="1.2" height="1.2"/><rect x="8" y="5.5" width="1.2" height="1.2"/><rect x="3" y="8" width="1.2" height="1.2"/><rect x="5.5" y="8" width="1.2" height="1.2"/><rect x="8" y="8" width="1.2" height="1.2"/></g></svg></div>
<div class="a" style="left:37px;top:322px;width:305px;height:256px;background:#7b97e4;border-radius:5px 5px 0 0;overflow:hidden">
<div class="tbi" style="left:0;top:0;width:305px;height:18px"></div>
<div class="ttl" style="left:5px;top:7px;font-size:8.5px">Terreno</div>
</div>
<div class="a" style="left:39px;top:340px;width:301px;height:236px;background:#ECE9D8"></div>
<div class="rad on" style="left:46px;top:347px"></div>
<div class="t ui" style="left:57px;top:348px;">Marco con tierras sobre el dintel</div>
<div class="grid" style="left:61px;top:369px;width:165px;height:65px">
<div class="hc" style="left:0px;top:0;width:33px;height:14px;line-height:14px"><span>Punto</span></div>
<div class="hc" style="left:33px;top:0;width:61px;height:14px;line-height:14px"><span>Distancia D(m)</span></div>
<div class="hc" style="left:94px;top:0;width:61px;height:14px;line-height:14px"><span>ZT (m)</span></div>
<div class="hc" style="left:0px;top:14px;width:33px;height:10px;line-height:10px"><span>1</span></div>
<div class="dc" style="left:33px;top:14px;width:61px;height:10px;line-height:9px;"><span>0,000</span></div>
<div class="dc" style="left:94px;top:14px;width:61px;height:10px;line-height:9px;"><span>100,000</span></div>
<div class="hc" style="left:0px;top:24px;width:33px;height:10px;line-height:10px"><span>2</span></div>
<div class="dc" style="left:33px;top:24px;width:61px;height:10px;line-height:9px;"><span>10,000</span></div>
<div class="dc" style="left:94px;top:24px;width:61px;height:10px;line-height:9px;border:1px solid #000;box-shadow:inset 1px 1px 0 #000;padding-right:0.5px;line-height:8px;"><span>100,000</span></div>
</div>
<div class="btn" style="left:61px;top:438px;width:47px;height:14px;line-height:12px"><span>Añadir punto</span></div>
<div class="btn" style="left:119px;top:438px;width:47px;height:14px;line-height:12px"><span>Eliminar punto</span></div>
<div class="btn" style="left:177px;top:438px;width:48px;height:14px;line-height:12px"><span>Esquema</span></div>
<div class="rad" style="left:46px;top:464px"></div>
<div class="t ui" style="left:57px;top:464px;">Marco sin tierras sobre el dintel</div>
<div class="grid" style="left:61px;top:485px;width:165px;height:65px">
<div class="hc" style="left:0px;top:0;width:33px;height:14px;line-height:14px"><span>Módulo</span></div>
<div class="hc" style="left:33px;top:0;width:61px;height:14px;line-height:14px"><span>ZTizq (m)</span></div>
<div class="hc" style="left:94px;top:0;width:61px;height:14px;line-height:14px"><span>ZTder (m)</span></div>
<div class="hc" style="left:0px;top:14px;width:33px;height:11px;line-height:11px"><span>1</span></div>
<div class="dc" style="left:33px;top:14px;width:61px;height:11px;line-height:10px;background:#a0a0a0;border-color:#909090;"><span>0,000</span></div>
<div class="dc" style="left:94px;top:14px;width:61px;height:11px;line-height:10px;background:#a0a0a0;border-color:#909090;"><span>0,000</span></div>
</div>
<div class="btn" style="left:177px;top:556px;width:48px;height:14px;line-height:12px"><span>Esquema</span></div>
<div class="btn" style="left:280px;top:536px;width:47px;height:14px;line-height:12px"><span>Aceptar</span></div>
<div class="btn" style="left:280px;top:556px;width:47px;height:14px;line-height:12px"><span>Aplicar</span></div>
<div class="btn" style="left:331px;top:536px;width:20px;height:14px;line-height:12px"><span></span></div>
<div class="btn" style="left:331px;top:556px;width:20px;height:14px;line-height:12px"><span></span></div>
<div class="a" style="left:238px;top:42px;width:253px;height:448px;background:#7b97e4;border-radius:5px 5px 0 0;overflow:hidden">
<div class="tbi" style="left:0;top:0;width:253px;height:17px"></div>
<div class="ttl" style="left:5px;top:6px;font-size:8.5px">Planta</div>
<div class="cb cbx" style="left:237px;top:3px"><svg class="a" style="left:2px;top:2px" width="7" height="7"><path d="M1 1L6 6M6 1L1 6" stroke="#fff" stroke-width="1.3"/></svg></div>
</div>
<div class="a" style="left:240px;top:59px;width:249px;height:429px;background:#ECE9D8"></div>
<div class="t ui" style="left:247px;top:69px;">Azimut del eje de la calzada superior :</div>
<div class="inp" style="left:365px;top:65px;width:36px;height:14px;line-height:12px">0</div>
<div class="t ui" style="left:408px;top:68px;">g</div>
<div class="grid" style="left:247px;top:84px;width:234px;height:73px">
<div class="hc" style="left:0px;top:0;width:40px;height:13px;line-height:13px"><span>Junta</span></div>
<div class="hc" style="left:40px;top:0;width:46px;height:13px;line-height:13px"><span>XA (m)</span></div>
<div class="hc" style="left:86px;top:0;width:46px;height:13px;line-height:13px"><span>YA (m)</span></div>
<div class="hc" style="left:132px;top:0;width:45px;height:13px;line-height:13px"><span>XB (m)</span></div>
<div class="hc" style="left:177px;top:0;width:45px;height:13px;line-height:13px"><span>YB (m)</span></div>
<div class="hc" style="left:0px;top:13px;width:40px;height:10px;line-height:10px"><span>1</span></div>
<div class="dc" style="left:40px;top:13px;width:46px;height:10px;line-height:9px;"><span>0,000</span></div>
<div class="dc" style="left:86px;top:13px;width:46px;height:10px;line-height:9px;"><span>0,000</span></div>
<div class="dc" style="left:132px;top:13px;width:45px;height:10px;line-height:9px;"><span>0,000</span></div>
<div class="dc" style="left:177px;top:13px;width:45px;height:10px;line-height:9px;"><span>6,000</span></div>
<div class="hc" style="left:0px;top:23px;width:40px;height:10px;line-height:10px"><span>2</span></div>
<div class="dc" style="left:40px;top:23px;width:46px;height:10px;line-height:9px;"><span>10,000</span></div>
<div class="dc" style="left:86px;top:23px;width:46px;height:10px;line-height:9px;"><span>0,000</span></div>
<div class="dc" style="left:132px;top:23px;width:45px;height:10px;line-height:9px;"><span>10,000</span></div>
<div class="dc" style="left:177px;top:23px;width:45px;height:10px;line-height:9px;border:1px solid #000;box-shadow:inset 1px 1px 0 #000;padding-right:0.5px;line-height:8px;"><span>6,000</span></div>
</div>
<div class="btn" style="left:290px;top:160px;width:58px;height:15px;line-height:13px"><span>Ayuda</span></div>
<div class="btn" style="left:356px;top:160px;width:58px;height:15px;line-height:13px"><span>Eliminar Modulo</span></div>
<div class="btn" style="left:423px;top:160px;width:58px;height:15px;line-height:13px"><span>Añadir módulo</span></div>
<div class="grid" style="left:247px;top:178px;width:234px;height:74px">
<div class="hc" style="left:0px;top:0;width:40px;height:14px;line-height:14px"><span>Módulo</span></div>
<div class="hc" style="left:40px;top:0;width:47px;height:14px;line-height:14px"><span>A1 (m)</span></div>
<div class="hc" style="left:87px;top:0;width:45px;height:14px;line-height:14px"><span>A2 (m)</span></div>
<div class="hc" style="left:132px;top:0;width:45px;height:14px;line-height:14px"><span>A3 (m)</span></div>
<div class="hc" style="left:177px;top:0;width:46px;height:14px;line-height:14px"><span>A4 (m)</span></div>
<div class="hc" style="left:0px;top:14px;width:40px;height:10px;line-height:10px"><span>1</span></div>
<div class="dc" style="left:40px;top:14px;width:47px;height:10px;line-height:9px;"><span>2,000</span></div>
<div class="dc" style="left:87px;top:14px;width:45px;height:10px;line-height:9px;"><span>1,000</span></div>
<div class="dc" style="left:132px;top:14px;width:45px;height:10px;line-height:9px;"><span>1,000</span></div>
<div class="dc" style="left:177px;top:14px;width:46px;height:10px;line-height:9px;border:1px solid #000;box-shadow:inset 1px 1px 0 #000;padding-right:0.5px;line-height:8px;"><span>2,000</span></div>
</div>
<div class="btn" style="left:423px;top:254px;width:58px;height:14px;line-height:12px"><span>Ayuda</span></div>
<div class="grp" style="left:247px;top:272px;width:235px;height:189px"></div>
<div class="gl" style="left:251px;top:268px">Sobreanchos en zapatas</div>
<div class="grp" style="left:254px;top:283px;width:221px;height:77px"></div>
<div class="gl" style="left:257px;top:279px">En entrada</div>
<div class="t ui" style="left:312px;top:290px;">Zapata izquierda (L1) :</div>
<div class="inp" style="left:384px;top:286px;width:34px;height:13px">0</div>
<div class="t ui" style="left:423px;top:290px;">m</div>
<div class="t ui" style="left:312px;top:304px;">Zapata derecha&nbsp; (L2) :</div>
<div class="inp" style="left:384px;top:301px;width:34px;height:12px">0</div>
<div class="t ui" style="left:423px;top:304px;">m</div>
<div class="grp" style="left:309px;top:321px;width:161px;height:35px"></div>
<div class="gl" style="left:313px;top:317px">Forma en planta</div>
<div class="rad on" style="left:329px;top:330.5px"></div>
<div class="t ui" style="left:339px;top:331px;">Contorno paralelo al alzado (tipo A)</div>
<div class="rad" style="left:329px;top:343px"></div>
<div class="t ui" style="left:339px;top:344px;">Contorno perpendicular al hastial (tipo B)</div>
<div class="grp" style="left:254px;top:364px;width:221px;height:76px"></div>
<div class="gl" style="left:257px;top:360px">En salida</div>
<div class="t ui" style="left:312px;top:371px;">Zapata izquierda (L3) :</div>
<div class="inp" style="left:384px;top:368px;width:34px;height:13px">0</div>
<div class="t ui" style="left:312px;top:384px;">Zapata derecha&nbsp; (L4) :</div>
<div class="inp" style="left:384px;top:382px;width:34px;height:12px">0</div>
<div class="grp" style="left:309px;top:400px;width:161px;height:35px"></div>
<div class="gl" style="left:313px;top:396px">Forma en planta</div>
<div class="rad on" style="left:329px;top:408px"></div>
<div class="rad" style="left:329px;top:419.5px"></div>
<div class="btn" style="left:313px;top:468px;width:58px;height:14px;line-height:12px"><span>Aplicar</span></div>
<div class="a" style="left:535px;top:54px;width:187px;height:155px;background:#0831d9;border-radius:5px 5px 0 0;overflow:hidden">
<div class="tba" style="left:0;top:0;width:187px;height:18px"></div>
<svg class="a" style="left:4px;top:5px" width="10" height="10" viewBox="0 0 10 10"><rect x="0.5" y="0.5" width="9" height="9" fill="#a9a9a3" stroke="#8a8a84"/><rect x="3" y="2" width="4" height="6.5" fill="#fff"/><path d="M1.5 2H8.5" stroke="#777" stroke-width="1"/><path d="M1.5 8.5H3M7 8.5H8.5" stroke="#555" stroke-width="1"/></svg>
<div class="ttl" style="left:16px;top:7px;font-size:8.5px">Ayuda</div>
<div class="cb cbax" style="left:170px;top:4px"><svg class="a" style="left:2px;top:2px" width="7" height="7"><path d="M1 1L6 6M6 1L1 6" stroke="#fff" stroke-width="1.3"/></svg></div>
<div class="cb cba" style="left:156px;top:4px"><div class="a" style="left:2px;top:2px;width:7px;height:7px;border:1px solid #fff;border-top-width:2px"></div></div>
<div class="cb cba" style="left:142px;top:4px"><div class="a" style="left:2px;top:7px;width:4px;height:2px;background:#fff"></div></div>
</div>
<div class="a" style="left:537px;top:72px;width:183px;height:135px;background:#fff;border-left:1px solid #aca899;border-top:1px solid #aca899"></div>
<svg class="a" style="left:538px;top:73px" width="182" height="134" viewBox="538 73 182 134">
<g stroke="#333" fill="none" stroke-width="1">
<path d="M580.5 162V98.5H684.5V162"/>
<path d="M589.5 162V110.7L610.9 106.2H652.5L675.7 111.4V162"/>
<path d="M589.5 155.25H614.25V161.6H655.2V155.25H675.7"/>
<path d="M559.5 173V162.5H600.5V173M664.5 173V162.5H705V173"/>
</g>
<rect x="557" y="173" width="45.5" height="2.5" fill="#fff" stroke="#333" stroke-width="1"/>
<rect x="661.5" y="173" width="45" height="2.5" fill="#fff" stroke="#333" stroke-width="1"/>
<path d="M585 162.5H587M678 162.5H680" stroke="#fff" stroke-width="1.5"/>
<g stroke="#ff2020" fill="none" stroke-width="0.9">
<path d="M558 180H581.2M558 177.5V183M581.2 177.5V183M556.5 178.5L559.5 181.5M579.7 178.5L582.7 181.5"/>
<path d="M588.4 180H601.2M588.4 177.5V183M601.2 177.5V183M586.9 178.5L589.9 181.5M599.7 178.5L602.7 181.5"/>
<path d="M664.4 180H677.3M664.4 177.5V183M677.3 177.5V183M662.9 178.5L665.9 181.5M675.8 178.5L678.8 181.5"/>
<path d="M684 180H706.5M684 177.5V183M706.5 177.5V183M682.5 178.5L685.5 181.5M705.0 178.5L708.0 181.5"/>
</g>
<g font-family="Liberation Sans" font-size="8" fill="#666">
<text x="566" y="189.5">A1</text><text x="589" y="189.5">A2</text><text x="665" y="189.5">A3</text><text x="689.5" y="189.5">A4</text>
</g></svg>
<div class="a" style="left:527px;top:214px;width:219px;height:157px;background:#7b97e4;border-radius:5px 5px 0 0;overflow:hidden">
<div class="tbi" style="left:0;top:0;width:219px;height:19px"></div>
<svg class="a" style="left:4px;top:5px" width="10" height="10" viewBox="0 0 10 10"><rect x="0.5" y="0.5" width="9" height="9" fill="#a9a9a3" stroke="#8a8a84"/><rect x="3" y="2" width="4" height="6.5" fill="#fff"/><path d="M1.5 2H8.5" stroke="#777" stroke-width="1"/><path d="M1.5 8.5H3M7 8.5H8.5" stroke="#555" stroke-width="1"/></svg>
<div class="ttl" style="left:16px;top:7px;font-size:8.5px">Ayuda</div>
<div class="cb cbx" style="left:202px;top:4px"><svg class="a" style="left:2px;top:2px" width="7" height="7"><path d="M1 1L6 6M6 1L1 6" stroke="#fff" stroke-width="1.3"/></svg></div>
<div class="cb " style="left:188px;top:4px"><div class="a" style="left:2px;top:2px;width:7px;height:7px;border:1px solid #fff;border-top-width:2px"></div></div>
<div class="cb " style="left:174px;top:4px"><div class="a" style="left:2px;top:7px;width:4px;height:2px;background:#fff"></div></div>
</div>
<div class="a" style="left:530px;top:233px;width:213px;height:135px;background:#fff;border-left:1px solid #aca899;border-top:1px solid #aca899"></div>
<svg class="a" style="left:531px;top:234px" width="211" height="134" viewBox="531 234 211 134">
<g stroke="#ff2020" fill="none" stroke-width="1">
<path d="M540.5 252.4H615.3M540.5 249V293.8M614.5 248.4V272M614.5 272V281.2H631"/>
<path d="M539 250.5L542 254.5M613 250.5L616 254.5"/>
</g>
<path d="M612.8 275L614.5 271L616.2 275Z" fill="#ff2020"/>
<g stroke="#555" fill="none" stroke-width="0.8">
<path d="M544.4 299.1L569.4 285.2H589.6L614.5 268.6L680.1 265L701.1 297"/>
</g>
<g stroke="#333" fill="none" stroke-width="1">
<path d="M540.5 350V296.5H544.5V299.6L707 296.5V293.8H711.1V349"/>
<path d="M540.5 299.6L711.1 296.5"/>
<path d="M540.5 350L711.1 349"/>
</g>
<path d="M540.5 305.4L711.1 302.8" stroke="#666" stroke-width="1.6"/>
<path d="M540.5 308.3L711.1 305" stroke="#aaa" stroke-width="0.8"/>
<path d="M540.5 341L711.1 339" stroke="#888" stroke-width="1"/>
<path d="M540.5 343.7L711.1 341.6" stroke="#444" stroke-width="1.2"/>
<g fill="none" stroke="#ff2020" stroke-width="0.8">
<circle cx="544.4" cy="299.1" r="1.6"/>
<circle cx="569.4" cy="285.2" r="1.6"/>
<circle cx="589.6" cy="285.2" r="1.6"/>
<circle cx="614.5" cy="268.6" r="1.6"/>
<circle cx="680.1" cy="265" r="1.6"/>
<circle cx="701.1" cy="297" r="1.6"/>
</g>
<g font-family="Liberation Sans" font-size="5.5" fill="#222">
<text x="543.5" y="296.5">1</text><text x="567.5" y="281.5">2</text><text x="586" y="281.5">3</text><text x="607.5" y="268.5">4</text><text x="682.5" y="264.5">5</text><text x="702" y="295.5">6</text>
<text x="576.5" y="252" font-size="6">D4</text><text x="620" y="280" font-size="6.5">ZT4</text>
</g></svg>
<div class="a" style="left:334px;top:373px;width:441px;height:250px;background:#7b97e4;border-radius:5px 5px 0 0;overflow:hidden">
<div class="tbi" style="left:0;top:0;width:441px;height:19px"></div>
<svg class="a" style="left:4px;top:5px" width="10" height="10" viewBox="0 0 10 10"><rect x="0.5" y="0.5" width="9" height="9" fill="#a9a9a3" stroke="#8a8a84"/><rect x="3" y="2" width="4" height="6.5" fill="#fff"/><path d="M1.5 2H8.5" stroke="#777" stroke-width="1"/><path d="M1.5 8.5H3M7 8.5H8.5" stroke="#555" stroke-width="1"/></svg>
<div class="ttl" style="left:16px;top:7px;font-size:8.5px">Ayuda</div>
<div class="cb cbx" style="left:424px;top:4px"><svg class="a" style="left:2px;top:2px" width="7" height="7"><path d="M1 1L6 6M6 1L1 6" stroke="#fff" stroke-width="1.3"/></svg></div>
<div class="cb " style="left:410px;top:4px"><div class="a" style="left:2px;top:2px;width:7px;height:7px;border:1px solid #fff;border-top-width:2px"></div></div>
<div class="cb " style="left:396px;top:4px"><div class="a" style="left:2px;top:7px;width:4px;height:2px;background:#fff"></div></div>
</div>
<div class="a" style="left:337px;top:392px;width:435px;height:228px;background:#fff;border-left:1px solid #aca899;border-top:1px solid #aca899"></div>
<svg class="a" style="left:337px;top:392px" width="435" height="228" viewBox="337 392 435 228">
<g stroke="#2a2a2a" fill="none" stroke-width="1">
<path d="M395.1 478.6L498.8 460.2M396.5 484.1L499.9 466.8"/>
<path d="M395.1 478.6L410.8 570.8M498.8 460.2L509.8 552"/>
<path d="M410.8 570.8L509.8 552M410.3 565.8L509.3 548.2"/>
<path d="M498.8 460.2H628.3M499.9 467.3H628.8M509.8 552H618.3M509.3 547.5H619"/>
<path d="M628.3 460L618.3 551.7"/>
<path d="M628.1 460L734.6 490.2M628.8 466.5L732.8 495.4M734.6 490.2L711.3 583.3M618.3 551.7L711.3 583.3M619 547.8L712.6 579.2"/>
<path d="M564.4 399V460"/>
</g>
<g stroke="#2a2a2a" fill="none" stroke-width="1" stroke-dasharray="4 2.5">
<path d="M399.3 489.6L499.9 473.1M399.8 496.5L499.9 480M410.3 552.9L503.8 536.4M410.3 559.8L507.8 541.5"/>
<path d="M500 472.6H628M500 479.4H628M509 535.75H620M509 541.25H620"/>
<path d="M631.5 474L730.5 499.9M631.5 479.6L729.4 506.6M626 536L714 566.5M626 541.25L711.3 571"/>
</g>
<path d="M348.4 535L503.8 506.7H623.6L749.8 544" stroke="#ff2a2a" stroke-width="1" fill="none" stroke-dasharray="16 3 1.5 3"/>
<path d="M523 597L582.6 402" stroke="#2030ff" stroke-width="1" fill="none" stroke-dasharray="9 3 1.5 3"/>
<path d="M564.4 411C569 410 574 411.5 578 414" stroke="#2030ff" stroke-width="1.1" fill="none"/><path d="M575 411.5L579.5 414.8L575.5 416Z" fill="#2030ff"/><path d="M566 409L564.4 411L566.5 413Z" fill="#2030ff"/>
<g stroke="#ff2020" fill="none" stroke-width="1">
<path d="M457 441H488.6L498.3 459.4"/>
<path d="M353.9 517H382.8L402 529.5"/>
<path d="M664 445.2H633.75L628.8 458.7"/>
<path d="M767.6 559.2H719.5"/>
</g>
<g fill="#ff2020"><path d="M493.5 452L499 460L499.3 450.5Z"/><path d="M396 522.5L403 530L393 528Z"/><path d="M628.3 452L628.8 459L632 452.5Z"/><path d="M726 556.7L719 559.2L726 561.7Z"/></g>
<path d="M730 468.4H683L666 479.5" stroke="#4a50ff" stroke-width="1" fill="none"/><circle cx="663.7" cy="480.3" r="2.4" fill="#fff" stroke="#3040ff" stroke-width="1"/>
<g fill="none" stroke="#ff2020" stroke-width="0.9">
<circle cx="397" cy="491" r="2.4"/>
<circle cx="500.2" cy="472.6" r="2.4"/>
<circle cx="410.3" cy="559" r="2.4"/>
<circle cx="507.9" cy="541" r="2.4"/>
<circle cx="626.4" cy="472.6" r="2.4"/>
<circle cx="620" cy="542.6" r="2.4"/>
<circle cx="730" cy="501" r="2.4"/>
<circle cx="711.3" cy="572.9" r="2.4"/>
</g>
<g font-family="Liberation Sans" font-size="7.5" fill="#1e1e1e">
<text x="457" y="440" textLength="31">JUNTA 2</text>
<text x="354" y="516.5" textLength="29">JUNTA I</text>
<text x="635" y="443.8" textLength="29">JUNTA3</text>
<text x="734.6" y="557.6" textLength="33">JUNTA 4</text>
<text x="580" y="417.8" textLength="27.5">AZIMUT</text>
<text x="442.7" y="577" textLength="35">MODULO I</text>
<text x="552.5" y="562.8" textLength="37.5">MODULO 2</text>
<text x="644" y="587.6" textLength="37">MODULO 3</text>
<text x="527" y="596.8" textLength="77">EJE DE LA CALZADA</text>
<text x="531" y="605.2" textLength="35">SUPERIOR</text>
<text x="504.3" y="469.8" font-size="7">B2</text>
<text x="385" y="496.6" font-size="7">BI</text>
<text x="397.9" y="562.6" font-size="7">AI</text>
<text x="512" y="537.9" font-size="7">A2</text>
<text x="630" y="482.2" font-size="7">B3</text>
<text x="625.5" y="540.8" font-size="7">A3</text>
<text x="734" y="506.8" font-size="7">B4</text>
<text x="715.4" y="579.8" font-size="7">A4</text>
<text x="683" y="467.6" font-size="9.5" fill="#888" textLength="46">HASTIAL</text>
</g></svg>
</body></html>
